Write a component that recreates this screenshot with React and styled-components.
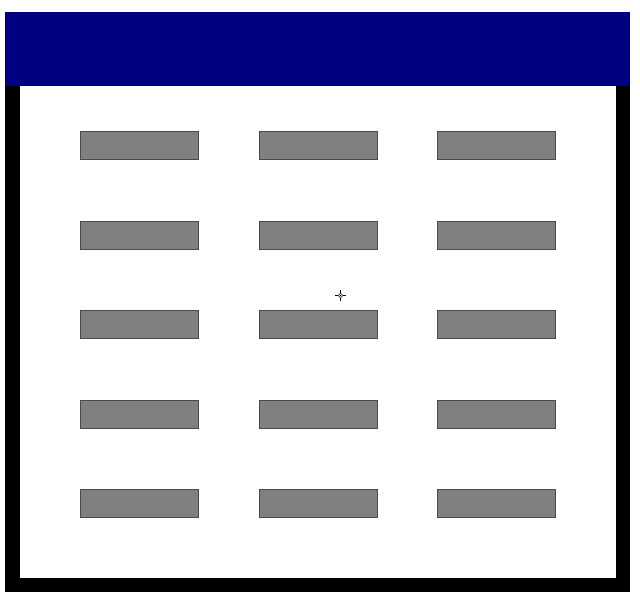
import React from 'react'
import styled, { createGlobalStyle } from 'styled-components'

const GlobalStyle = createGlobalStyle`
  html, body {
    margin: 0;
    padding: 0;
    background: #ffffff;
    font-family: "Liberation Sans", Arial, sans-serif;
  }
`

const Window = styled.div`
  position: relative;
  margin: 12px 0 0 5px;
  width: 625px;
  display: flex;
  flex-direction: column;
`
const TitleBar = styled.div`
  height: 74px;
  background: #000080;
`
const Frame = styled.div`
  border-style: solid;
  border-color: #000000;
  border-width: 0 14px 14px 15px;
  background: #ffffff;
  height: 506px;
  padding: 45px 0 0 60px;
  box-sizing: border-box;
`
const ButtonGrid = styled.div`
  display: grid;
  grid-template-columns: repeat(3, 119px);
  grid-auto-rows: 29px;
  column-gap: 59.5px;
  row-gap: 60.5px;
`
const Slot = styled.div`
  background: #808080;
  border: 1px solid #4a4a4a;
  box-sizing: border-box;
`
const Pointer = styled.svg`
  position: absolute;
  left: ${({ x }) => x - 5}px;
  top: ${({ y }) => y - 5}px;
  width: 11px;
  height: 11px;
  pointer-events: none;
`

export default function App() {
  const slots = Array.from({ length: 15 }, (_, i) => i)
  return (
    <>
      <GlobalStyle />
      <Window>
        <TitleBar />
        <Frame>
          <ButtonGrid>
            {slots.map(i => <Slot key={`slot-${i}`} />)}
          </ButtonGrid>
        </Frame>
      </Window>
      <Pointer x={340} y={295} viewBox="0 0 11 11">
        <path d="M5.5 0v3.5M5.5 7.5v3.5M0 5.5h3.5M7.5 5.5h3.5" stroke="#000" strokeWidth="1" />
        <circle cx="5.5" cy="5.5" r="1.8" fill="#fff" stroke="#000" strokeWidth="0.8" />
        <rect x="5" y="5" width="1" height="1" fill="#000" />
      </Pointer>
    </>
  )
}
